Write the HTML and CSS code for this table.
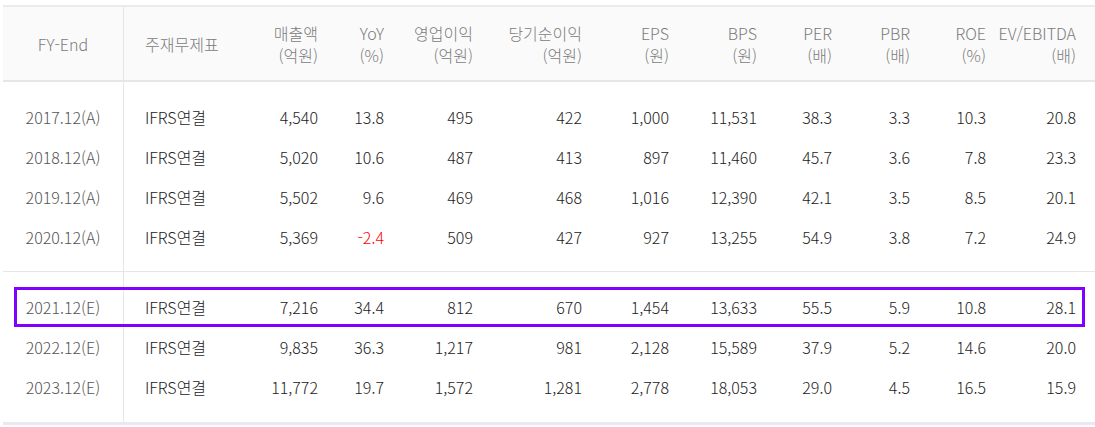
FILE: index.html
```html
<!DOCTYPE html>
<html lang="ko">
<head>
<meta charset="utf-8">
<link rel="stylesheet" href="styles.css">
</head>
<body>
<div class="fin">
  <div class="row head">
    <div class="c fy">FY-End</div>
    <div class="c txt">주재무제표</div>
    <div class="c num">매출액<br>(억원)</div>
    <div class="c num">YoY<br>(%)</div>
    <div class="c num">영업이익<br>(억원)</div>
    <div class="c num">당기순이익<br>(억원)</div>
    <div class="c num">EPS<br>(원)</div>
    <div class="c num">BPS<br>(원)</div>
    <div class="c num">PER<br>(배)</div>
    <div class="c num">PBR<br>(배)</div>
    <div class="c num">ROE<br>(%)</div>
    <div class="c num">EV/EBITDA<br>(배)</div>
  </div>

  <div class="row gap"><div class="c fy"></div></div>

  <div class="row">
    <div class="c fy">2017.12(A)</div><div class="c txt">IFRS연결</div>
    <div class="c num">4,540</div><div class="c num">13.8</div><div class="c num">495</div><div class="c num">422</div><div class="c num">1,000</div><div class="c num">11,531</div><div class="c num">38.3</div><div class="c num">3.3</div><div class="c num">10.3</div><div class="c num">20.8</div>
  </div>
  <div class="row">
    <div class="c fy">2018.12(A)</div><div class="c txt">IFRS연결</div>
    <div class="c num">5,020</div><div class="c num">10.6</div><div class="c num">487</div><div class="c num">413</div><div class="c num">897</div><div class="c num">11,460</div><div class="c num">45.7</div><div class="c num">3.6</div><div class="c num">7.8</div><div class="c num">23.3</div>
  </div>
  <div class="row">
    <div class="c fy">2019.12(A)</div><div class="c txt">IFRS연결</div>
    <div class="c num">5,502</div><div class="c num">9.6</div><div class="c num">469</div><div class="c num">468</div><div class="c num">1,016</div><div class="c num">12,390</div><div class="c num">42.1</div><div class="c num">3.5</div><div class="c num">8.5</div><div class="c num">20.1</div>
  </div>
  <div class="row">
    <div class="c fy">2020.12(A)</div><div class="c txt">IFRS연결</div>
    <div class="c num">5,369</div><div class="c num neg">-2.4</div><div class="c num">509</div><div class="c num">427</div><div class="c num">927</div><div class="c num">13,255</div><div class="c num">54.9</div><div class="c num">3.8</div><div class="c num">7.2</div><div class="c num">24.9</div>
  </div>

  <div class="row gap gap-end"><div class="c fy"></div></div>
  <div class="row gap gap-top"><div class="c fy"></div></div>

  <div class="row hl">
    <div class="c fy">2021.12(E)</div><div class="c txt">IFRS연결</div>
    <div class="c num">7,216</div><div class="c num">34.4</div><div class="c num">812</div><div class="c num">670</div><div class="c num">1,454</div><div class="c num">13,633</div><div class="c num">55.5</div><div class="c num">5.9</div><div class="c num">10.8</div><div class="c num">28.1</div>
  </div>
  <div class="row">
    <div class="c fy">2022.12(E)</div><div class="c txt">IFRS연결</div>
    <div class="c num">9,835</div><div class="c num">36.3</div><div class="c num">1,217</div><div class="c num">981</div><div class="c num">2,128</div><div class="c num">15,589</div><div class="c num">37.9</div><div class="c num">5.2</div><div class="c num">14.6</div><div class="c num">20.0</div>
  </div>
  <div class="row">
    <div class="c fy">2023.12(E)</div><div class="c txt">IFRS연결</div>
    <div class="c num">11,772</div><div class="c num">19.7</div><div class="c num">1,572</div><div class="c num">1,281</div><div class="c num">2,778</div><div class="c num">18,053</div><div class="c num">29.0</div><div class="c num">4.5</div><div class="c num">16.5</div><div class="c num">15.9</div>
  </div>

  <div class="row gap gap-last"><div class="c fy"></div></div>
</div>
</body>
</html>
```

FILE: styles.css
```css
html, body {
  margin: 0;
  padding: 0;
  background: #ffffff;
}
body {
  font-family: "Noto Sans CJK KR", "Noto Sans", sans-serif;
  font-size: 16px;
  font-weight: 300;
  color: #222222;
}
.fin {
  margin: 5px 0 0 3px;
  width: 1100px;
  border-top: 2px solid #ebebeb;
  border-bottom: 3px solid #e8e8ee;
}
.row {
  display: grid;
  grid-template-columns: 121px 126px 68px 66px 89px 109px 87px 88px 75px 78px 76px 90px 1fr;
  height: 40px;
  position: relative;
}
.c {
  display: flex;
  align-items: center;
  white-space: nowrap;
}
.fy {
  justify-content: center;
  color: #555555;
  border-right: 1px solid #e6e6e6;
}
.txt {
  padding-left: 21px;
}
.num {
  justify-content: flex-end;
  text-align: right;
}
.neg {
  color: #ff0000;
}
.head {
  height: 73px;
  background: #fafafa;
  border-bottom: 2px solid #e6e6ea;
  color: #7a7a7a;
  line-height: 22px;
}
.head .fy {
  color: #7a7a7a;
}
.gap {
  height: 15px;
}
.gap-end {
  height: 14px;
  border-bottom: 1px solid #e6e6e6;
}
.gap-top {
  height: 15px;
}
.gap-last {
  height: 15px;
}
.hl::after {
  content: "";
  position: absolute;
  left: 11px;
  top: 0;
  width: 1071px;
  bottom: 0;
  border: 3px solid #7f00ff;
  box-sizing: border-box;
}
```
